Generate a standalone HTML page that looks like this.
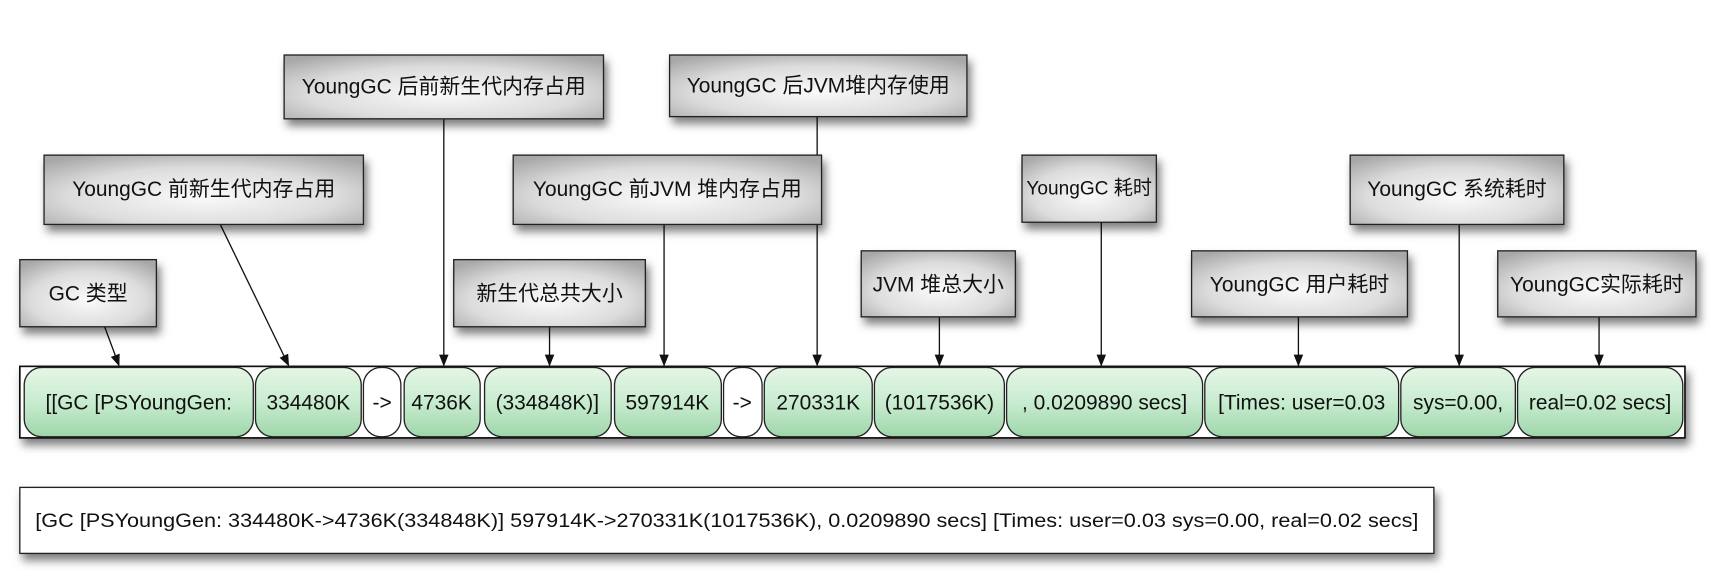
<!DOCTYPE html>
<html><head><meta charset="utf-8"><style>
html,body{margin:0;padding:0;background:#fff;}
svg{display:block;}
text{font-family:"Liberation Sans","Noto Sans CJK SC",sans-serif;fill:#111;}
</style></head><body>
<svg width="1718" height="571" viewBox="0 0 1560 519" preserveAspectRatio="none" xmlns="http://www.w3.org/2000/svg">
<defs>
<radialGradient id="gg" cx="50%" cy="60%" r="70%">
<stop offset="0" stop-color="#fafafa"/><stop offset="0.6" stop-color="#dcdcdc"/><stop offset="1" stop-color="#a8a8a8"/>
</radialGradient>
<linearGradient id="gr" x1="0" y1="0" x2="0" y2="1">
<stop offset="0" stop-color="#e6f6e6"/><stop offset="0.5" stop-color="#c8ecd0"/><stop offset="1" stop-color="#9fd6aa"/>
</linearGradient>
<filter id="sh" x="-10%" y="-20%" width="130%" height="160%"><feDropShadow dx="3" dy="6" stdDeviation="4" flood-color="#000" flood-opacity="0.5"/></filter>
<marker id="ar" viewBox="0 0 10 10" refX="9" refY="5" markerWidth="9" markerHeight="9" orient="auto"><path d="M0,1 L10,5 L0,9 z" fill="#111"/></marker>
</defs>
<g stroke="#111" stroke-width="1.2" marker-end="url(#ar)">
<line x1="95" y1="297" x2="108" y2="332"/>
<line x1="200" y1="204" x2="262" y2="332"/>
<line x1="403" y1="108" x2="403" y2="332"/>
<line x1="499" y1="297" x2="499" y2="332"/>
<line x1="603" y1="204" x2="603" y2="332"/>
<line x1="742" y1="106" x2="742" y2="332"/>
<line x1="853" y1="288" x2="853" y2="332"/>
<line x1="1000" y1="202" x2="1000" y2="332"/>
<line x1="1179" y1="288" x2="1179" y2="332"/>
<line x1="1325" y1="204" x2="1325" y2="332"/>
<line x1="1452" y1="288" x2="1452" y2="332"/>
</g>
<g filter="url(#sh)" fill="url(#gg)" stroke="#222" stroke-width="1.2">
<rect x="258" y="50" width="290" height="58"/>
<rect x="608" y="50" width="270" height="56"/>
<rect x="40" y="141" width="290" height="63"/>
<rect x="466" y="141" width="280" height="63"/>
<rect x="928" y="141" width="122" height="61"/>
<rect x="1226" y="141" width="194" height="63"/>
<rect x="18" y="236" width="124" height="61"/>
<rect x="412" y="236" width="174" height="61"/>
<rect x="782" y="228" width="140" height="60"/>
<rect x="1082" y="228" width="196" height="60"/>
<rect x="1360" y="228" width="180" height="60"/>
</g>
<g font-size="19" text-anchor="middle">
<text x="403" y="85">YoungGC 后前新生代内存占用</text>
<text x="743" y="84">YoungGC 后JVM堆内存使用</text>
<text x="185" y="178">YoungGC 前新生代内存占用</text>
<text x="606" y="178">YoungGC 前JVM 堆内存占用</text>
<text x="989" y="177" font-size="18" textLength="114" lengthAdjust="spacingAndGlyphs">YoungGC 耗时</text>
<text x="1323" y="178">YoungGC 系统耗时</text>
<text x="80" y="273">GC 类型</text>
<text x="499" y="273">新生代总共大小</text>
<text x="852" y="265">JVM 堆总大小</text>
<text x="1180" y="265">YoungGC 用户耗时</text>
<text x="1450" y="265">YoungGC实际耗时</text>
</g>
<rect x="18" y="333" width="1512" height="65" fill="#fff" stroke="#111" stroke-width="1.5" filter="url(#sh)"/>
<g stroke="#222" stroke-width="1.2">
<rect x="22" y="334" width="208" height="63" rx="16" fill="url(#gr)"/>
<rect x="232" y="334" width="96" height="63" rx="16" fill="url(#gr)"/>
<rect x="330" y="334" width="34" height="63" rx="16" fill="#fff"/>
<rect x="367" y="334" width="69" height="63" rx="16" fill="url(#gr)"/>
<rect x="440" y="334" width="115" height="63" rx="16" fill="url(#gr)"/>
<rect x="558" y="334" width="97" height="63" rx="16" fill="url(#gr)"/>
<rect x="657" y="334" width="35" height="63" rx="16" fill="#fff"/>
<rect x="694" y="334" width="98" height="63" rx="16" fill="url(#gr)"/>
<rect x="794" y="334" width="118" height="63" rx="16" fill="url(#gr)"/>
<rect x="914" y="334" width="178" height="63" rx="16" fill="url(#gr)"/>
<rect x="1094" y="334" width="176" height="63" rx="16" fill="url(#gr)"/>
<rect x="1272" y="334" width="104" height="63" rx="16" fill="url(#gr)"/>
<rect x="1378" y="334" width="150" height="63" rx="16" fill="url(#gr)"/>
</g>
<g font-size="19" text-anchor="middle">
<text x="126" y="372">[[GC [PSYoungGen:</text>
<text x="280" y="372">334480K</text>
<text x="347" y="372">-&gt;</text>
<text x="401" y="372">4736K</text>
<text x="497" y="372">(334848K)]</text>
<text x="606" y="372">597914K</text>
<text x="674" y="372">-&gt;</text>
<text x="743" y="372">270331K</text>
<text x="853" y="372">(1017536K)</text>
<text x="1003" y="372">, 0.0209890 secs]</text>
<text x="1182" y="372">[Times: user=0.03</text>
<text x="1324" y="372">sys=0.00,</text>
<text x="1453" y="372">real=0.02 secs]</text>
</g>
<rect x="18" y="443" width="1284" height="60" fill="#fff" stroke="#222" stroke-width="1.2" filter="url(#sh)"/>
<text x="32" y="479" font-size="18" textLength="1256" lengthAdjust="spacingAndGlyphs">[GC [PSYoungGen: 334480K-&gt;4736K(334848K)] 597914K-&gt;270331K(1017536K), 0.0209890 secs] [Times: user=0.03 sys=0.00, real=0.02 secs]</text>
</svg>
</body></html>
